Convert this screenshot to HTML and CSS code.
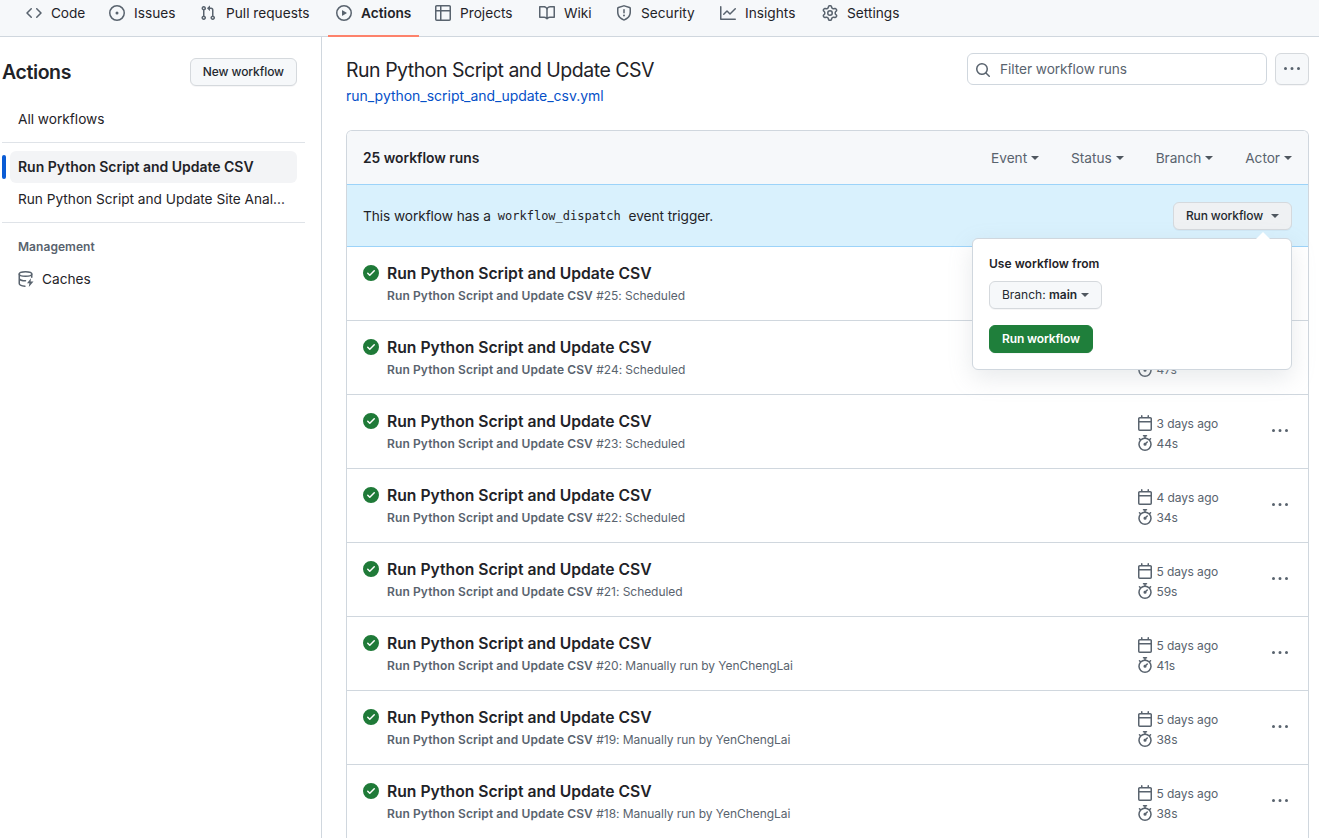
FILE: index.html
```
<!DOCTYPE html>
<html lang="en">
<head>
<meta charset="utf-8">
<title>Actions · Workflow runs</title>
<link rel="stylesheet" href="styles.css">
</head>
<body>
<svg class="sprite" aria-hidden="true">
  <symbol id="check" viewBox="0 0 16 16"><path d="M8 16A8 8 0 1 1 8 0a8 8 0 0 1 0 16Zm3.78-9.72a.751.751 0 0 0-.018-1.042.751.751 0 0 0-1.042-.018L6.75 9.19 5.28 7.72a.751.751 0 0 0-1.042.018.751.751 0 0 0-.018 1.042l2 2a.75.75 0 0 0 1.06 0Z"/></symbol>
  <symbol id="calendar" viewBox="0 0 16 16"><path d="M4.75 0a.75.75 0 0 1 .75.75V2h5V.75a.75.75 0 0 1 1.5 0V2h1.25c.966 0 1.75.784 1.75 1.75v10.5A1.75 1.75 0 0 1 13.25 16H2.75A1.75 1.75 0 0 1 1 14.25V3.75C1 2.784 1.784 2 2.75 2H4V.75A.75.75 0 0 1 4.75 0ZM2.5 7.5v6.75c0 .138.112.25.25.25h10.5a.25.25 0 0 0 .25-.25V7.5Zm10.75-4H2.75a.25.25 0 0 0-.25.25V6h11V3.75a.25.25 0 0 0-.25-.25Z"/></symbol>
  <symbol id="stopwatch" viewBox="0 0 16 16"><path d="M5.75.75A.75.75 0 0 1 6.5 0h3a.75.75 0 0 1 0 1.5h-.75v1l-.001.041a6.724 6.724 0 0 1 3.464 1.435l.007-.006.75-.75a.749.749 0 0 1 1.275.326.749.749 0 0 1-.215.734l-.75.75-.006.007a6.75 6.75 0 1 1-10.548 0L2.72 5.03l-.75-.75a.751.751 0 0 1 .018-1.042.751.751 0 0 1 1.042-.018l.75.75.007.006A6.72 6.72 0 0 1 7.25 2.541V1.5H6.5a.75.75 0 0 1-.75-.75ZM8 14.5a5.25 5.25 0 1 0-.001-10.501A5.25 5.25 0 0 0 8 14.5Zm.389-6.7 1.33-1.33a.75.75 0 1 1 1.061 1.06L9.45 8.861A1.503 1.503 0 0 1 8 10.75a1.499 1.499 0 1 1 .389-2.95Z"/></symbol>
  <symbol id="dots" viewBox="0 0 16 16"><path d="M8 9a1.5 1.5 0 1 0 0-3 1.5 1.5 0 0 0 0 3ZM1.5 9a1.5 1.5 0 1 0 0-3 1.5 1.5 0 0 0 0 3Zm13 0a1.5 1.5 0 1 0 0-3 1.5 1.5 0 0 0 0 3Z"/></symbol>
</svg>

<nav class="tabs">
  <a class="tab tab-code"><svg class="icon" viewBox="0 0 16 16"><path d="m11.28 3.22 4.25 4.25a.75.75 0 0 1 0 1.06l-4.25 4.25a.749.749 0 0 1-1.275-.326.749.749 0 0 1 .215-.734L13.94 8l-3.72-3.72a.749.749 0 0 1 .326-1.275.749.749 0 0 1 .734.215Zm-6.56 0a.751.751 0 0 1 1.042.018.751.751 0 0 1 .018 1.042L2.06 8l3.72 3.72a.749.749 0 0 1-.326 1.275.749.749 0 0 1-.734-.215L.47 8.53a.75.75 0 0 1 0-1.06Z"/></svg>Code</a>
  <a class="tab tab-issues"><svg class="icon" viewBox="0 0 16 16"><path d="M8 9.5a1.5 1.5 0 1 0 0-3 1.5 1.5 0 0 0 0 3Z"/><path d="M8 0a8 8 0 1 1 0 16A8 8 0 0 1 8 0ZM1.5 8a6.5 6.5 0 1 0 13 0 6.5 6.5 0 0 0-13 0Z"/></svg>Issues</a>
  <a class="tab tab-pulls"><svg class="icon" viewBox="0 0 16 16"><path d="M1.5 3.25a2.25 2.25 0 1 1 3 2.122v5.256a2.251 2.251 0 1 1-1.5 0V5.372A2.25 2.25 0 0 1 1.5 3.25Zm5.677-.177L9.573.677A.25.25 0 0 1 10 .854V2.5h1A2.5 2.5 0 0 1 13.5 5v5.628a2.251 2.251 0 1 1-1.5 0V5a1 1 0 0 0-1-1h-1v1.646a.25.25 0 0 1-.427.177L7.177 3.427a.25.25 0 0 1 0-.354ZM3.75 2.5a.75.75 0 1 0 0 1.5.75.75 0 0 0 0-1.5Zm0 9.5a.75.75 0 1 0 0 1.5.75.75 0 0 0 0-1.5Zm8.25.75a.75.75 0 1 0 1.5 0 .75.75 0 0 0-1.5 0Z"/></svg>Pull requests</a>
  <a class="tab tab-actions tab-active"><svg class="icon" viewBox="0 0 16 16"><path d="M8 0a8 8 0 1 1 0 16A8 8 0 0 1 8 0ZM1.5 8a6.5 6.5 0 1 0 13 0 6.5 6.5 0 0 0-13 0Zm4.879-2.773 4.264 2.559a.25.25 0 0 1 0 .428l-4.264 2.559A.25.25 0 0 1 6 10.559V5.442a.25.25 0 0 1 .379-.215Z"/></svg>Actions</a>
  <a class="tab tab-projects"><svg class="icon" viewBox="0 0 16 16"><path d="M0 1.75C0 .784.784 0 1.75 0h12.5C15.216 0 16 .784 16 1.75v12.5A1.75 1.75 0 0 1 14.25 16H1.75A1.75 1.75 0 0 1 0 14.25ZM6.5 6.5v8h7.75a.25.25 0 0 0 .25-.25V6.5Zm8-1.5V1.75a.25.25 0 0 0-.25-.25H6.5V5Zm-13 1.5v7.75c0 .138.112.25.25.25H5v-8ZM5 5V1.5H1.75a.25.25 0 0 0-.25.25V5Z"/></svg>Projects</a>
  <a class="tab tab-wiki"><svg class="icon" viewBox="0 0 16 16"><path d="M0 1.75A.75.75 0 0 1 .75 1h4.253c1.227 0 2.317.59 3 1.501A3.743 3.743 0 0 1 11.006 1h4.245a.75.75 0 0 1 .75.75v10.5a.75.75 0 0 1-.75.75h-4.507a2.25 2.25 0 0 0-1.591.659l-.622.621a.75.75 0 0 1-1.06 0l-.622-.621A2.25 2.25 0 0 0 5.258 13H.75a.75.75 0 0 1-.75-.75Zm7.251 10.324.004-5.073-.002-2.253A2.25 2.25 0 0 0 5.003 2.5H1.5v9h3.757a3.75 3.75 0 0 1 1.994.574ZM8.755 4.75l-.004 7.322a3.752 3.752 0 0 1 1.992-.572H14.5v-9h-3.495a2.25 2.25 0 0 0-2.25 2.25Z"/></svg>Wiki</a>
  <a class="tab tab-security"><svg class="icon" viewBox="0 0 16 16"><path d="M7.467.133a1.748 1.748 0 0 1 1.066 0l5.25 1.68A1.75 1.75 0 0 1 15 3.48V7c0 1.566-.32 3.182-1.303 4.682-.983 1.498-2.585 2.813-5.032 3.855a1.697 1.697 0 0 1-1.33 0c-2.447-1.042-4.049-2.357-5.032-3.855C1.32 10.182 1 8.566 1 7V3.48a1.75 1.75 0 0 1 1.217-1.667Zm.61 1.429a.25.25 0 0 0-.153 0l-5.25 1.68a.25.25 0 0 0-.174.238V7c0 1.358.275 2.666 1.057 3.86.784 1.194 2.121 2.34 4.366 3.297a.196.196 0 0 0 .154 0c2.245-.956 3.582-2.104 4.366-3.298C13.225 9.666 13.5 8.36 13.5 7V3.48a.251.251 0 0 0-.174-.237l-5.25-1.68ZM8.75 4.75v3a.75.75 0 0 1-1.5 0v-3a.75.75 0 0 1 1.5 0ZM9 10.5a1 1 0 1 1-2 0 1 1 0 0 1 2 0Z"/></svg>Security</a>
  <a class="tab tab-insights"><svg class="icon" viewBox="0 0 16 16"><path d="M1.5 1.75V13.5h13.75a.75.75 0 0 1 0 1.5H.75a.75.75 0 0 1-.75-.75V1.75a.75.75 0 0 1 1.5 0Zm14.28 2.53-5.25 5.25a.75.75 0 0 1-1.06 0L7 7.06 4.28 9.78a.751.751 0 0 1-1.042-.018.751.751 0 0 1-.018-1.042l3.25-3.25a.75.75 0 0 1 1.06 0L10 7.94l4.72-4.72a.751.751 0 0 1 1.042.018.751.751 0 0 1 .018 1.042Z"/></svg>Insights</a>
  <a class="tab"><svg class="icon" viewBox="0 0 16 16"><path d="M8 0a8.2 8.2 0 0 1 .701.031C9.444.095 9.99.645 10.16 1.29l.288 1.107c.018.066.079.158.212.224.231.114.454.243.668.386.123.082.233.09.299.071l1.103-.303c.644-.176 1.392.021 1.82.63.27.385.506.792.704 1.218.315.675.111 1.422-.364 1.891l-.814.806c-.049.048-.098.147-.088.294.016.257.016.515 0 .772-.01.147.038.246.088.294l.814.806c.475.469.679 1.216.364 1.891a7.977 7.977 0 0 1-.704 1.217c-.428.61-1.176.807-1.82.63l-1.102-.302c-.067-.019-.177-.011-.3.071a5.909 5.909 0 0 1-.668.386c-.133.066-.194.158-.211.224l-.29 1.106c-.168.646-.715 1.196-1.458 1.26a8.006 8.006 0 0 1-1.402 0c-.743-.064-1.289-.614-1.458-1.26l-.289-1.106c-.018-.066-.079-.158-.212-.224a5.738 5.738 0 0 1-.668-.386c-.123-.082-.233-.09-.299-.071l-1.103.303c-.644.176-1.392-.021-1.82-.63a8.12 8.12 0 0 1-.704-1.218c-.315-.675-.111-1.422.363-1.891l.815-.806c.05-.048.098-.147.088-.294a6.214 6.214 0 0 1 0-.772c.01-.147-.038-.246-.088-.294l-.815-.806C.635 6.045.431 5.298.746 4.623a7.92 7.92 0 0 1 .704-1.217c.428-.61 1.176-.807 1.82-.63l1.102.302c.067.019.177.011.3-.071.214-.143.437-.272.668-.386.133-.066.194-.158.211-.224l.29-1.106C6.009.645 6.556.095 7.299.03 7.53.01 7.764 0 8 0Zm-.571 1.525c-.036.003-.108.036-.137.146l-.289 1.105c-.147.561-.549.967-.998 1.189-.173.086-.34.183-.5.29-.417.278-.97.423-1.529.27l-1.103-.303c-.109-.03-.175.016-.195.045-.22.312-.412.644-.573.99-.014.031-.021.11.059.19l.815.806c.411.406.562.957.53 1.456a4.709 4.709 0 0 0 0 .582c.032.499-.119 1.05-.53 1.456l-.815.806c-.081.08-.073.159-.059.19.162.346.353.677.573.989.02.03.085.076.195.046l1.102-.303c.56-.153 1.113-.008 1.53.27.161.107.328.204.501.29.447.222.85.629.997 1.189l.289 1.105c.029.109.101.143.137.146a6.6 6.6 0 0 0 1.142 0c.036-.003.108-.036.137-.146l.289-1.105c.147-.561.549-.967.998-1.189.173-.086.34-.183.5-.29.417-.278.97-.423 1.529-.27l1.103.303c.109.029.175-.016.195-.045.22-.313.411-.644.573-.99.014-.031.021-.11-.059-.19l-.815-.806c-.411-.406-.562-.957-.53-1.456a4.709 4.709 0 0 0 0-.582c-.032-.499.119-1.05.53-1.456l.815-.806c.081-.08.073-.159.059-.19a6.464 6.464 0 0 0-.573-.989c-.02-.03-.085-.076-.195-.046l-1.102.303c-.56.153-1.113.008-1.53-.27a4.44 4.44 0 0 0-.501-.29c-.447-.222-.85-.629-.997-1.189l-.289-1.105c-.029-.11-.101-.143-.137-.146a6.6 6.6 0 0 0-1.142 0ZM11 8a3 3 0 1 1-6 0 3 3 0 0 1 6 0ZM9.5 8a1.5 1.5 0 1 0-3.001.001A1.5 1.5 0 0 0 9.5 8Z"/></svg>Settings</a>
</nav>

<div class="page">
  <aside class="sidebar">
    <div class="side-head"><h2 class="side-title">Actions</h2><button class="btn">New workflow</button></div>
    <a class="side-link">All workflows</a>
    <hr class="rule">
    <a class="side-link side-current">Run Python Script and Update CSV</a>
    <a class="side-link">Run Python Script and Update Site Anal...</a>
    <hr class="rule">
    <h3 class="side-group">Management</h3>
    <a class="side-link side-caches"><svg class="icon-line" viewBox="0 0 16 16"><ellipse cx="7.5" cy="3" rx="6.25" ry="2.25"/><path d="M1.25 3v9.4c0 1.4 2.4 2.5 5.7 2.8M13.75 3v3.2M1.25 7.6c.6 1.3 2.8 2.2 6.25 2.2"/><path class="bolt" d="M13 7.2 9 12.2h2.4l-.6 3.8 4.7-5.4h-2.9z"/></svg>Caches</a>
  </aside>

  <main class="content">
    <header class="head">
      <div>
        <h1 class="title">Run Python Script and Update CSV</h1>
        <a class="file">run_python_script_and_update_csv.yml</a>
      </div>
      <div class="head-tools">
        <div class="search"><svg class="icon" viewBox="0 0 16 16"><path d="M10.68 11.74a6 6 0 0 1-7.922-8.982 6 6 0 0 1 8.982 7.922l3.04 3.04a.749.749 0 0 1-.326 1.275.749.749 0 0 1-.734-.215ZM11.5 7a4.499 4.499 0 1 0-8.997 0A4.499 4.499 0 0 0 11.5 7Z"/></svg>Filter workflow runs</div>
        <button class="btn btn-more"><svg class="icon"><use href="#dots"/></svg></button>
      </div>
    </header>

    <section class="box">
      <div class="box-head">
        <strong class="count">25 workflow runs</strong>
        <div class="filters">
          <a class="filter caret">Event</a>
          <a class="filter caret">Status</a>
          <a class="filter caret">Branch</a>
          <a class="filter caret">Actor</a>
        </div>
      </div>
      <div class="dispatch">
        <p class="dispatch-text"><span>This workflow has a</span><code>workflow_dispatch</code><span>event trigger.</span></p>
        <div class="menu">
          <button class="btn btn-open caret">Run workflow</button>
          <div class="popover">
            <strong class="pop-title">Use workflow from</strong>
            <button class="btn btn-branch caret"><span>Branch: <b>main</b></span></button>
            <button class="btn btn-primary">Run workflow</button>
          </div>
        </div>
      </div>

      <div class="run"><svg class="ok"><use href="#check"/></svg><div class="run-main"><a class="run-title">Run Python Script and Update CSV</a><p class="run-sub"><b>Run Python Script and Update CSV</b> #25: Scheduled</p></div><div class="meta"><div><svg class="icon"><use href="#calendar"/></svg>yesterday</div><div><svg class="icon"><use href="#stopwatch"/></svg>45s</div></div><svg class="icon more"><use href="#dots"/></svg></div>
      <div class="run"><svg class="ok"><use href="#check"/></svg><div class="run-main"><a class="run-title">Run Python Script and Update CSV</a><p class="run-sub"><b>Run Python Script and Update CSV</b> #24: Scheduled</p></div><div class="meta"><div><svg class="icon"><use href="#calendar"/></svg>2 days ago</div><div><svg class="icon"><use href="#stopwatch"/></svg>47s</div></div><svg class="icon more"><use href="#dots"/></svg></div>
      <div class="run"><svg class="ok"><use href="#check"/></svg><div class="run-main"><a class="run-title">Run Python Script and Update CSV</a><p class="run-sub"><b>Run Python Script and Update CSV</b> #23: Scheduled</p></div><div class="meta"><div><svg class="icon"><use href="#calendar"/></svg>3 days ago</div><div><svg class="icon"><use href="#stopwatch"/></svg>44s</div></div><svg class="icon more"><use href="#dots"/></svg></div>
      <div class="run"><svg class="ok"><use href="#check"/></svg><div class="run-main"><a class="run-title">Run Python Script and Update CSV</a><p class="run-sub"><b>Run Python Script and Update CSV</b> #22: Scheduled</p></div><div class="meta"><div><svg class="icon"><use href="#calendar"/></svg>4 days ago</div><div><svg class="icon"><use href="#stopwatch"/></svg>34s</div></div><svg class="icon more"><use href="#dots"/></svg></div>
      <div class="run"><svg class="ok"><use href="#check"/></svg><div class="run-main"><a class="run-title">Run Python Script and Update CSV</a><p class="run-sub"><b>Run Python Script and Update CSV</b> #21: Scheduled</p></div><div class="meta"><div><svg class="icon"><use href="#calendar"/></svg>5 days ago</div><div><svg class="icon"><use href="#stopwatch"/></svg>59s</div></div><svg class="icon more"><use href="#dots"/></svg></div>
      <div class="run"><svg class="ok"><use href="#check"/></svg><div class="run-main"><a class="run-title">Run Python Script and Update CSV</a><p class="run-sub"><b>Run Python Script and Update CSV</b> #20: Manually run by YenChengLai</p></div><div class="meta"><div><svg class="icon"><use href="#calendar"/></svg>5 days ago</div><div><svg class="icon"><use href="#stopwatch"/></svg>41s</div></div><svg class="icon more"><use href="#dots"/></svg></div>
      <div class="run"><svg class="ok"><use href="#check"/></svg><div class="run-main"><a class="run-title">Run Python Script and Update CSV</a><p class="run-sub"><b>Run Python Script and Update CSV</b> #19: Manually run by YenChengLai</p></div><div class="meta"><div><svg class="icon"><use href="#calendar"/></svg>5 days ago</div><div><svg class="icon"><use href="#stopwatch"/></svg>38s</div></div><svg class="icon more"><use href="#dots"/></svg></div>
      <div class="run"><svg class="ok"><use href="#check"/></svg><div class="run-main"><a class="run-title">Run Python Script and Update CSV</a><p class="run-sub"><b>Run Python Script and Update CSV</b> #18: Manually run by YenChengLai</p></div><div class="meta"><div><svg class="icon"><use href="#calendar"/></svg>5 days ago</div><div><svg class="icon"><use href="#stopwatch"/></svg>38s</div></div><svg class="icon more"><use href="#dots"/></svg></div>
    </section>
  </main>
</div>
</body>
</html>
```
FILE: styles.css
```
* { box-sizing: border-box; }

body {
  margin: 0;
  height: 100vh;
  overflow: hidden;
  display: flex;
  flex-direction: column;
  background: #fff;
  color: #1f2328;
  font: 13.7px/20px Inter, "Liberation Sans", sans-serif;
  -webkit-font-smoothing: antialiased;
}

h1, h2, h3, p { margin: 0; }
b, strong { font-weight: 600; }

.sprite { position: absolute; width: 0; height: 0; }
.icon { width: 16px; height: 16px; fill: #59636e; flex: none; }

/* Repository tabs */
.tabs {
  display: flex;
  gap: 8px;
  flex: none;
  height: 37px;
  padding-left: 18px;
  background: #f6f8fa;
  border-bottom: 1px solid #d0d7de;
}
.tab {
  display: flex;
  align-items: center;
  gap: 9px;
  height: 37px;
  padding: 0 8px 11px;
  flex: none;
  white-space: nowrap;
}
.tab-code { width: 75px; letter-spacing: -.15px; }
.tab-issues { width: 83px; }
.tab-pulls { width: 128px; gap: 10px; }
.tab-actions { width: 91px; }
.tab-projects { width: 96px; }
.tab-wiki { width: 69px; }
.tab-security { width: 96px; }
.tab-insights { width: 94px; }
.tab-active { font-weight: 600; border-bottom: 2px solid #fd826b; padding-bottom: 9px; }

.page { display: flex; flex: 1; min-height: 0; }

/* Sidebar */
.sidebar {
  width: 322px;
  flex: none;
  padding: 21px 16px 0 2px;
  border-right: 1px solid #d0d7de;
}
.side-head {
  display: flex;
  align-items: center;
  justify-content: space-between;
  height: 28px;
  margin-right: 8px;
  margin-bottom: 17px;
}
.side-title { font-size: 19.5px; line-height: 28px; font-weight: 600; letter-spacing: -.4px; }
.side-link {
  display: flex;
  align-items: center;
  height: 32px;
  margin: 0 8px;
  padding-left: 8px;
  border-radius: 6px;
  letter-spacing: -.02px;
  white-space: nowrap;
}
.side-current { position: relative; background: #f3f4f6; font-size: 14px; font-weight: 600; }
.side-current::before {
  content: "";
  position: absolute;
  left: -8px;
  top: 4px;
  width: 4px;
  height: 24px;
  border-radius: 6px;
  background: #0b5cd5;
}
.rule { height: 1px; margin: 7px 0 8px; border: 0; background: #dfe3e8; }
.side-group {
  margin: 15px 0 7px 16px;
  color: #59636e;
  font-size: 12px;
  line-height: 18px;
  font-weight: 600;
  letter-spacing: .05px;
}
.side-caches { gap: 8px; }
.icon-line { width: 16px; height: 16px; fill: none; stroke: #59636e; stroke-width: 1.5; stroke-linecap: round; }
.bolt { fill: #59636e; stroke: none; }

/* Buttons */
.btn {
  display: inline-flex;
  align-items: center;
  height: 28px;
  padding: 0 12px;
  border: 1px solid #d5d9dd;
  border-radius: 6px;
  background: #f6f8fa;
  box-shadow: 0 1px 0 rgba(31, 35, 40, .04);
  color: #24292f;
  font: 500 12px/20px Inter, "Liberation Sans", sans-serif;
  letter-spacing: -.08px;
  white-space: nowrap;
}
.caret::after {
  content: "";
  display: inline-block;
  margin-left: 4px;
  border: 4px solid transparent;
  border-top-color: #4f575f;
  border-bottom: 0;
}

/* Main column */
.content { flex: 1; min-width: 0; padding: 16px 10px 0 24px; }
.head { display: flex; justify-content: space-between; height: 77px; }
.title { font-size: 19.5px; line-height: 34px; font-weight: 400; letter-spacing: -.49px; }
.file { display: block; color: #0550c8; font-size: 14px; line-height: 18px; letter-spacing: -.02px; }
.head-tools { display: flex; gap: 8px; }
.search {
  display: flex;
  align-items: center;
  gap: 9px;
  width: 300px;
  height: 32px;
  padding-left: 7px;
  border: 1px solid #d0d7de;
  border-radius: 6px;
  color: #59636e;
  letter-spacing: -.07px;
}
.search .icon { margin-top: 1px; }
.btn-more { width: 34px; height: 32px; padding: 0 8px; }

.box { border: 1px solid #d0d7de; border-bottom: 0; border-radius: 6px 6px 0 0; }
.box-head {
  display: flex;
  align-items: center;
  justify-content: space-between;
  height: 53px;
  padding: 0 16px;
  border-radius: 5px 5px 0 0;
  background: #f6f8fa;
}
.count { font-size: 13.8px; }
.filters { display: flex; gap: 32px; color: #59636e; letter-spacing: -.04px; }
.filter { display: flex; align-items: center; }
.filter::after { margin-top: 1px; }

.dispatch {
  display: flex;
  align-items: center;
  justify-content: space-between;
  height: 63px;
  padding: 0 16px;
  background: #d9f1fd;
  border: solid #9cd3f9;
  border-width: 1px 0;
}
.dispatch-text { display: flex; align-items: center; letter-spacing: -.08px; }
.dispatch code {
  padding: 1px 8px 0 7px;
  font: 12px/20px "DejaVu Sans Mono", "Liberation Mono", monospace;
  letter-spacing: 0;
}
.menu { position: relative; display: flex; }
.btn-open { background: #eff1f3; letter-spacing: -.12px; }
.btn-open::after { margin-left: 8px; margin-top: 1px; }

.popover {
  position: absolute;
  z-index: 2;
  top: 36px;
  right: 0;
  display: flex;
  flex-direction: column;
  align-items: flex-start;
  width: 320px;
  height: 132px;
  padding: 15px 16px;
  border: 1px solid #d0d7de;
  border-radius: 6px;
  background: #fff;
  box-shadow: 0 8px 24px rgba(140, 149, 159, .2);
}
.popover::before {
  content: "";
  position: absolute;
  top: -7px;
  right: 21px;
  border: 7px solid transparent;
  border-top: 0;
  border-bottom-color: #fff;
}
.pop-title { font-size: 12px; line-height: 20px; margin-bottom: 7px; letter-spacing: .03px; }
.btn-branch { margin-bottom: 16px; font-weight: 400; letter-spacing: 0; }
.btn-primary { background: #1f7f3b; border-color: #1f7f3b; color: #fff; font-weight: 600; letter-spacing: -.14px; }

/* Workflow runs */
.run { display: flex; height: 73px; padding: 16px; }
.run + .run { height: 74px; border-top: 1px solid #d0d7de; }
.ok { width: 16px; height: 16px; margin: 2px 8px 0 0; fill: #1f7a38; flex: none; }
.run-main { flex: 1; }
.run-title { display: block; font-size: 15.7px; line-height: 21px; font-weight: 600; letter-spacing: 0; }
.run-sub { margin-top: 2px; font-size: 12px; line-height: 20px; color: #59636e; letter-spacing: -.05px; }
.run-sub b { letter-spacing: .11px; }
.meta { width: 135px; padding-top: 3px; font-size: 12px; letter-spacing: -.07px; color: #59636e; }
.meta div { display: flex; align-items: center; gap: 3.5px; height: 20px; }
.meta .icon { margin-bottom: 2px; }
.more { margin: 12px 4px 0 0; }
```
